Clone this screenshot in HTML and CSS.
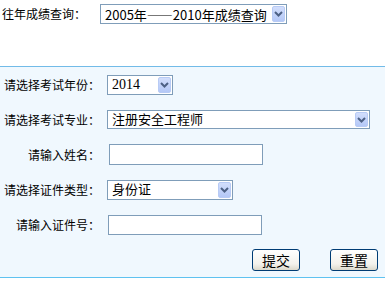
FILE: index.html
```html
<!DOCTYPE html>
<html lang="zh-CN">
<head>
  <meta charset="UTF-8">
  <title>成绩查询</title>
  <link rel="stylesheet" href="styles.css">
</head>
<body>
<div class="history">
  <span class="history-label">往年成绩查询：</span>
  <span class="sel sel-history">
    <select>
      <option>2005年——2010年成绩查询</option>
    </select>
    <span class="arrow"><svg width="9" height="6" viewBox="0 0 9 6"><path d="M1 1 L4.5 4.5 L8 1" fill="none" stroke="#4d6185" stroke-width="2"/></svg></span>
  </span>
</div>

<form class="query">
  <label class="label">请选择考试年份：</label>
  <div class="field">
    <span class="sel sel-year">
      <select class="serif"><option>2014</option></select>
      <span class="arrow"><svg width="9" height="6" viewBox="0 0 9 6"><path d="M1 1 L4.5 4.5 L8 1" fill="none" stroke="#4d6185" stroke-width="2"/></svg></span>
    </span>
  </div>

  <label class="label">请选择考试专业：</label>
  <div class="field">
    <span class="sel sel-major">
      <select><option>注册安全工程师</option></select>
      <span class="arrow"><svg width="9" height="6" viewBox="0 0 9 6"><path d="M1 1 L4.5 4.5 L8 1" fill="none" stroke="#4d6185" stroke-width="2"/></svg></span>
    </span>
  </div>

  <label class="label">请输入姓名：</label>
  <div class="field"><input type="text" class="text text-name"></div>

  <label class="label">请选择证件类型：</label>
  <div class="field">
    <span class="sel sel-type">
      <select><option>身份证</option></select>
      <span class="arrow"><svg width="9" height="6" viewBox="0 0 9 6"><path d="M1 1 L4.5 4.5 L8 1" fill="none" stroke="#4d6185" stroke-width="2"/></svg></span>
    </span>
  </div>

  <label class="label">请输入证件号：</label>
  <div class="field"><input type="text" class="text text-id"></div>

  <div class="actions">
    <button type="button" class="btn">提交</button>
    <button type="reset" class="btn">重置</button>
  </div>
</form>
</body>
</html>
```

FILE: styles.css
```css
body {
  margin: 0;
  background: #fff;
  color: #000;
  font-family: "Noto Sans CJK SC", "Liberation Sans", sans-serif;
  font-size: 12px;
}

/* 往年查询 */
.history {
  height: 66px;
  box-sizing: border-box;
  padding: 4px 0 0 2px;
  display: flex;
  align-items: flex-start;
}
.history-label {
  line-height: 20px;
  width: 98px;
}

/* 下拉框 */
.sel {
  position: relative;
  display: inline-block;
}
.sel select {
  -webkit-appearance: none;
  appearance: none;
  display: block;
  box-sizing: border-box;
  width: 100%;
  height: 19px;
  margin: 0;
  padding: 0 0 0 4px;
  border: 1px solid #7f9db9;
  border-radius: 0;
  background: #fff;
  color: #000;
  font-family: "Liberation Sans", "Noto Sans CJK SC", sans-serif;
  font-size: 13px;
  line-height: 17px;
}
.sel select.serif {
  font-family: "Liberation Serif", "Noto Sans CJK SC", serif;
  font-size: 14px;
}
.sel .arrow {
  position: absolute;
  top: 2px;
  right: 2px;
  bottom: 2px;
  width: 13px;
  box-sizing: border-box;
  border: 1px solid #b8cbf5;
  border-radius: 2px;
  background: linear-gradient(#d2defc, #b4c8f7);
  display: flex;
  align-items: center;
  justify-content: center;
  pointer-events: none;
}
.sel-history { width: 187px; }
.sel-history select {
  height: 20px;
  font-family: "Noto Sans CJK SC", sans-serif;
}
.sel-history .arrow { top: 2px; bottom: 2px; }
.sel-year { width: 66px; }
.sel-major { width: 263px; }
.sel-type { width: 126px; }
.sel-year select,
.sel-type select { height: 20px; }

/* 查询表单 */
.query {
  margin: 0;
  border-top: 1px solid #72bbe8;
  border-bottom: 1px solid #5fc2f0;
  background: #f0f8fe;
  display: grid;
  grid-template-columns: 104px 1fr;
  grid-auto-rows: 35px;
  align-items: center;
}
.label {
  text-align: right;
  padding-right: 4px;
  white-space: nowrap;
}
.field {
  display: flex;
  align-items: center;
  padding-left: 3px;
}

.text {
  box-sizing: border-box;
  height: 21px;
  margin: 0 0 0 2px;
  padding: 0 3px;
  border: 1px solid #7f9db9;
  background: #fff;
  outline: none;
}
.text-name { width: 154px; }
.text-id { width: 154px; height: 20px; margin-left: 1px; }

.actions {
  grid-column: 1 / -1;
  display: flex;
  justify-content: flex-end;
  gap: 30px;
  padding-right: 7px;
}
.btn {
  width: 48px;
  height: 22px;
  margin: 0;
  padding: 0;
  border: 1px solid #003c74;
  border-radius: 3px;
  background: linear-gradient(#ffffff, #f3f2ec 70%, #dcd9cb);
  color: #000;
  font-family: "Noto Sans CJK SC", sans-serif;
  font-size: 14px;
  line-height: 20px;
}
```
